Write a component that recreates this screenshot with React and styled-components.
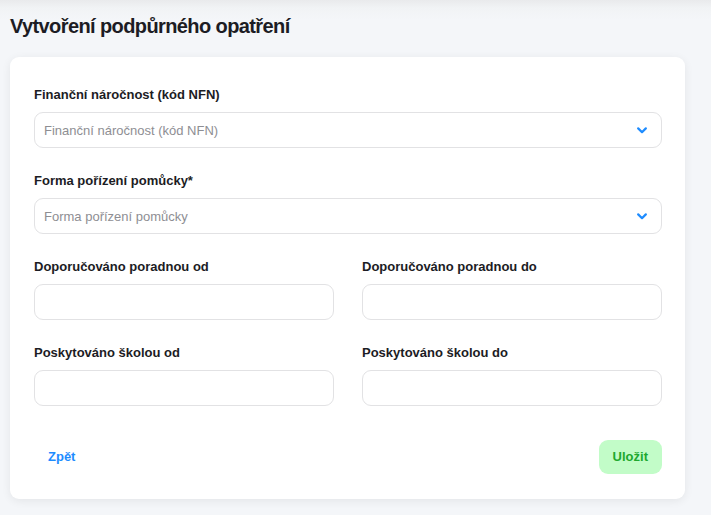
import React from "react";
import styled, { createGlobalStyle } from "styled-components";

const Global = createGlobalStyle`
  html, body { margin: 0; padding: 0; }
  body {
    background: #f4f6f9;
    font-family: "Liberation Sans", Arial, sans-serif;
    color: #1c1c24;
  }
  * { box-sizing: border-box; }
`;

const Page = styled.div`
  min-height: 515px;
  padding: 0 26px 16px 10px;
  background: linear-gradient(to bottom, #e9eaec 0px, #f1f3f5 8px, #f4f6f9 20px);
`;

const Title = styled.h1`
  margin: 0;
  padding: 14px 0 19px;
  font-size: 20px;
  line-height: 24px;
  font-weight: 700;
  letter-spacing: -0.6px;
  color: #1c1c24;
`;

const Card = styled.form`
  background: #fff;
  border-radius: 9px;
  box-shadow: 0 2px 10px rgba(0, 0, 0, 0.07);
  padding: 29px 23px 25px 24px;
  display: flex;
  flex-direction: column;
  gap: 24px;
`;

const Row = styled.div`
  display: grid;
  grid-template-columns: ${(p) => (p.$cols === 2 ? "1fr 1fr" : "1fr")};
  column-gap: 28px;
`;

const Field = styled.div`
  display: flex;
  flex-direction: column;
  gap: 9px;
`;

const Label = styled.label`
  font-size: 13px;
  line-height: 17px;
  font-weight: 700;
  color: #1c1c24;
`;

const SelectBox = styled.div`
  height: 36px;
  border: 1px solid #e2e2e4;
  border-radius: 9px;
  display: flex;
  align-items: center;
  justify-content: space-between;
  padding: 0 14px 0 9px;
  font-size: 13px;
  color: #8e8e93;
`;

const Input = styled.input`
  height: 36px;
  border: 1px solid #e2e2e4;
  border-radius: 9px;
  padding: 0 9px;
  font-size: 13px;
  font-family: inherit;
  outline: none;
  background: #fff;
`;

const Actions = styled.div`
  display: flex;
  justify-content: space-between;
  align-items: center;
  margin-top: 9px;
`;

const BackButton = styled.button`
  border: none;
  background: none;
  padding: 10px 14px;
  font-family: inherit;
  font-size: 13px;
  font-weight: 700;
  color: #1e8cff;
  cursor: pointer;
`;

const SaveButton = styled.button`
  border: none;
  background: #c2fcc8;
  border-radius: 9px;
  height: 34px;
  padding: 0 14px;
  font-family: inherit;
  font-size: 13px;
  font-weight: 700;
  color: #20a82e;
  cursor: pointer;
`;

const Chevron = () => (
  <svg width="10" height="7" viewBox="0 0 10 7">
    <path d="M1.2 1.4 L5 5.2 L8.8 1.4" fill="none" stroke="#1e8cff" strokeWidth="2.2" strokeLinecap="round" strokeLinejoin="round" />
  </svg>
);

const Select = ({ placeholder }) => (
  <SelectBox>
    <span>{placeholder}</span>
    <Chevron />
  </SelectBox>
);

export default function App() {
  return (
    <>
      <Global />
      <Page>
        <Title>Vytvoření podpůrného opatření</Title>
        <Card onSubmit={(e) => e.preventDefault()}>
          <Row>
            <Field>
              <Label>Finanční náročnost (kód NFN)</Label>
              <Select placeholder="Finanční náročnost (kód NFN)" />
            </Field>
          </Row>
          <Row>
            <Field>
              <Label>Forma pořízení pomůcky*</Label>
              <Select placeholder="Forma pořízení pomůcky" />
            </Field>
          </Row>
          <Row $cols={2}>
            <Field>
              <Label>Doporučováno poradnou od</Label>
              <Input />
            </Field>
            <Field>
              <Label>Doporučováno poradnou do</Label>
              <Input />
            </Field>
          </Row>
          <Row $cols={2}>
            <Field>
              <Label>Poskytováno školou od</Label>
              <Input />
            </Field>
            <Field>
              <Label>Poskytováno školou do</Label>
              <Input />
            </Field>
          </Row>
          <Actions>
            <BackButton type="button">Zpět</BackButton>
            <SaveButton type="submit">Uložit</SaveButton>
          </Actions>
        </Card>
      </Page>
    </>
  );
}
